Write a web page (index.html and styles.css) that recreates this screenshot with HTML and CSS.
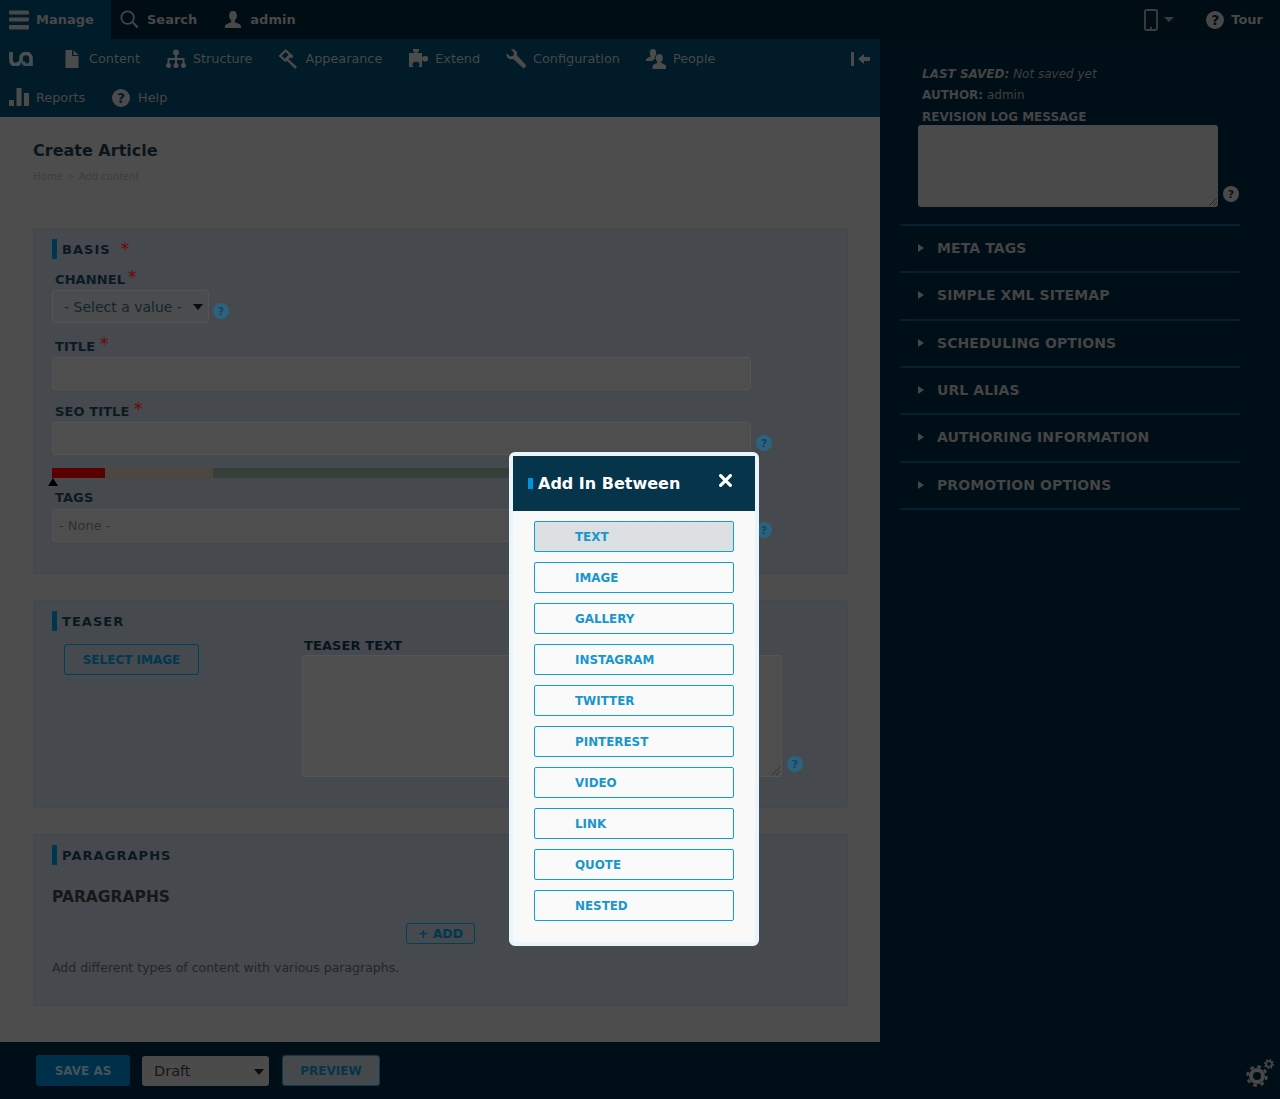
FILE: index.html
```html
<!DOCTYPE html>
<html lang="en">
<head>
<meta charset="utf-8">
<title>Create Article</title>
<link rel="stylesheet" href="styles.css">
</head>
<body>
<div class="app">
  <header class="topbar">
    <a class="top-item manage">
      <svg class="ic-top" viewBox="0 0 20 20"><path d="M0 1.500a1 1 0 0 1 1-1h18a1 1 0 0 1 1 1v2a1 1 0 0 1-1 1H1a1 1 0 0 1-1-1zM0 8.500a1 1 0 0 1 1-1h18a1 1 0 0 1 1 1v2a1 1 0 0 1-1 1H1a1 1 0 0 1-1-1zM0 16a1 1 0 0 1 1-1h18a1 1 0 0 1 1 1v2.500a1 1 0 0 1-1 1H1a1 1 0 0 1-1-1z"/></svg>
      <span>Manage</span>
    </a>
    <a class="top-item search">
      <svg class="ic-search" viewBox="0 0 20 20"><circle cx="8" cy="8" r="6.600" fill="none" stroke="#464646" stroke-width="1.800"/><path d="M12.500 13.500l1.500-1.500 5.500 5.500-1.800 1.800z"/></svg>
      <span>Search</span>
    </a>
    <a class="top-item user">
      <svg class="ic-user" viewBox="0 0 20 20"><path d="M10 0c3 0 4.300 2.300 4.300 5 0 2.500-1 4.500-2.300 5.500v2c2.500 1 6.500 2 7 4.500v2H1v-2c.5-2.500 4.500-3.500 7-4.500v-2C6.700 9.500 5.700 7.500 5.700 5c0-2.700 1.300-5 4.300-5z"/></svg>
      <span>admin</span>
    </a>
    <div class="top-right">
      <svg class="ic-phone" viewBox="0 0 14 22"><rect x="1" y="1" width="12" height="20" rx="1.500" fill="none" stroke="#3d3d3d" stroke-width="1.800"/><rect x="6" y="18" width="2" height="2" fill="#3d3d3d"/></svg>
      <span class="caret-top"></span>
      <a class="top-item tour"><span class="help-solid">?</span><span>Tour</span></a>
    </div>
  </header>

  <div class="columns">
    <div class="left">
      <nav class="tray">
        <div class="tray-row">
          <a class="logo">
            <svg viewBox="0 0 24 14" width="24" height="14"><path d="M14 9.500a4 4 0 0 0 7.500 1.500" fill="none" stroke="#35505e" stroke-width="3.400"/><path d="M2 0v8a4.500 4.500 0 0 0 8.700 1.800" fill="none" stroke="#4b4f51" stroke-width="3.800"/><path d="M12 10V6.200a5 4.800 0 0 1 10 0V14" fill="none" stroke="#4b4f51" stroke-width="3.600"/></svg>
          </a>
          <a class="tray-item">
            <svg class="ic" viewBox="0 0 20 20"><path d="M3.500 1H10v6h6.500v12h-13zM11.500 1l5 5h-5z"/></svg>
            <span>Content</span>
          </a>
          <a class="tray-item">
            <svg class="ic" viewBox="0 0 20 20"><circle cx="10" cy="3.500" r="3"/><circle cx="2.500" cy="16.500" r="2.500"/><circle cx="10" cy="16.500" r="2.500"/><circle cx="17.500" cy="16.500" r="2.500"/><path d="M9 5h2v4h7.500v6h-2v-4H11v4H9v-4H3.500v4h-2V9H9z"/></svg>
            <span>Structure</span>
          </a>
          <a class="tray-item">
            <svg class="ic" viewBox="0 0 20 20"><path d="M7.500 0l8 7-2 2.500-1.500-1-1.600 1.500 8.600 8.100-1.800 1.900-8.400-8.300-1.700 1.300L.5 7zM7.600 3L3.500 7l3.300 2.800 4-4z"/></svg>
            <span>Appearance</span>
          </a>
          <a class="tray-item">
            <svg class="ic" viewBox="0 0 20 20"><path d="M5 0h6v2.500H9.500V4H14v4.500c1-1.300 2-1.500 3.500-1.500a2.800 2.800 0 0 1 0 5.600c-1.500 0-2.500-.4-3.500-1.600V18h-3.500c.8-1 1-1.700 1-2.500a3.500 2.800 0 0 0-7 0c0 .8.200 1.500 1 2.500H1V4h5.500V2.500H5z"/></svg>
            <span>Extend</span>
          </a>
          <a class="tray-item">
            <svg class="ic" viewBox="0 0 20 20"><path d="M5 .5c2.500-1 5.500.5 6 3 .2 1 .1 1.800-.2 2.600l8.700 9.400c.7.800.7 1.700 0 2.500l-.6.600c-.8.700-1.700.7-2.500 0L7.300 10c-2.700 1-5.700-.2-6.600-3-.3-1-.3-1.800 0-2.800l3.600 3.300 3-.7.700-3z"/></svg>
            <span>Configuration</span>
          </a>
          <a class="tray-item">
            <svg class="ic" viewBox="0 0 20 20"><path d="M7 0c2.200 0 3.300 1.700 3.300 3.800 0 1.500-.5 2.800-1.300 3.700v1.700l.8.400c-1.300.5-2.800 1.300-3.500 2.400H0v-1.500c.4-1.500 3-2.200 5-3V7.500c-.8-.9-1.300-2.200-1.300-3.700C3.700 1.700 4.800 0 7 0z"/><path d="M13.500 5c2.200 0 3.300 1.700 3.300 3.800 0 1.600-.6 3-1.500 3.900V14c1.800.7 4.200 1.500 4.700 3v3H6.500v-3c.5-1.500 2.900-2.300 4.700-3v-1.300c-.9-.9-1.500-2.300-1.500-3.900C9.700 6.700 11.300 5 13.500 5z"/></svg>
            <span>People</span>
          </a>
          <svg class="ic-collapse" viewBox="0 0 20 16"><rect x="0" y="1" width="3" height="14"/><path d="M7 8l6-5v3h6v4h-6v3z"/></svg>
        </div>
        <div class="tray-row">
          <a class="tray-item first">
            <svg class="ic" viewBox="0 0 20 20"><rect x="0" y="12" width="5" height="6"/><rect x="7.500" y="0" width="5" height="18"/><rect x="15" y="5" width="5" height="13"/></svg>
            <span>Reports</span>
          </a>
          <a class="tray-item">
            <span class="help-solid tray-help">?</span>
            <span>Help</span>
          </a>
        </div>
      </nav>

      <main class="content">
        <h1 class="page-title">Create Article</h1>
        <div class="crumbs">Home<span class="crumb-sep">»</span>Add content</div>

        <section class="card card-basis">
          <h2 class="card-head">BASIS <span class="star star-head">*</span></h2>
          <div class="field field-a">
            <label class="label">CHANNEL<span class="star star-tight">*</span></label>
            <div class="control-row">
              <div class="select">- Select a value -<span class="caret"></span></div>
              <span class="help-blue help-near">?</span>
            </div>
          </div>
          <div class="field field-b">
            <label class="label">TITLE <span class="star">*</span></label>
            <div class="control-row"><div class="input"></div></div>
          </div>
          <div class="field field-c">
            <label class="label">SEO TITLE <span class="star">*</span></label>
            <div class="control-row"><div class="input"></div><span class="help-blue">?</span></div>
          </div>
          <div class="meter">
            <span class="meter-red"></span><span class="meter-tan"></span><span class="meter-green"></span>
          </div>
          <div class="meter-mark"></div>
          <div class="field field-d">
            <label class="label label-tags">TAGS</label>
            <div class="control-row"><div class="input input-none">- None -</div><span class="help-blue">?</span></div>
          </div>
        </section>

        <section class="card card-teaser">
          <h2 class="card-head">TEASER</h2>
          <div class="teaser-body">
            <div class="teaser-left"><a class="btn-outline btn-select">SELECT IMAGE</a></div>
            <div class="teaser-right">
              <label class="label label-teaser">TEASER TEXT</label>
              <div class="control-row row-teaser">
                <div class="textarea teaser-area"><span class="grip"></span></div>
                <span class="help-blue help-teaser">?</span>
              </div>
            </div>
          </div>
        </section>

        <section class="card card-para">
          <h2 class="card-head">PARAGRAPHS</h2>
          <h3 class="para-title">PARAGRAPHS</h3>
          <a class="btn-outline btn-add">+ ADD</a>
          <p class="para-text">Add different types of content with various paragraphs.</p>
        </section>
      </main>
    </div>

    <aside class="side">
      <div class="meta">
        <div class="meta-line meta-em"><b>LAST SAVED:</b> Not saved yet</div>
        <div class="meta-line meta-author"><b>AUTHOR:</b> admin</div>
        <div class="meta-line meta-rev"><b>REVISION LOG MESSAGE</b></div>
        <div class="rev-row">
          <div class="rev-area"><span class="grip grip-dark"></span></div>
          <span class="help-grey">?</span>
        </div>
      </div>
      <ul class="acc">
        <li class="acc-row"><i class="tri"></i>META TAGS</li>
        <li class="acc-row"><i class="tri"></i>SIMPLE XML SITEMAP</li>
        <li class="acc-row"><i class="tri"></i>SCHEDULING OPTIONS</li>
        <li class="acc-row"><i class="tri"></i>URL ALIAS</li>
        <li class="acc-row"><i class="tri"></i>AUTHORING INFORMATION</li>
        <li class="acc-row"><i class="tri"></i>PROMOTION OPTIONS</li>
      </ul>
    </aside>
  </div>

  <footer class="bottom">
    <a class="btn-save">SAVE AS</a>
    <div class="select-draft">Draft<span class="caret"></span></div>
    <a class="btn-preview">PREVIEW</a>
    <svg class="gears" viewBox="0 0 30 30">
      <circle cx="12" cy="18" r="6" fill="none" stroke="#474747" stroke-width="4"/>
      <circle cx="12" cy="18" r="9.500" fill="none" stroke="#474747" stroke-width="2.600" stroke-dasharray="3.800 3.660"/>
      <circle cx="24" cy="6" r="2.900" fill="none" stroke="#474747" stroke-width="1.800"/>
      <circle cx="24" cy="6" r="4.400" fill="none" stroke="#474747" stroke-width="1.400" stroke-dasharray="1.700 1.750"/>
    </svg>
  </footer>
</div>

<div class="modal">
  <div class="modal-head">
    <span class="modal-title">Add In Between</span>
    <svg class="modal-close" viewBox="0 0 12 12"><path d="M1.500 1.500l9 9M10.500 1.500l-9 9" stroke="#fff" stroke-width="3" stroke-linecap="round"/></svg>
  </div>
  <div class="modal-body">
    <a class="type-btn is-active">TEXT</a>
    <a class="type-btn">IMAGE</a>
    <a class="type-btn">GALLERY</a>
    <a class="type-btn">INSTAGRAM</a>
    <a class="type-btn">TWITTER</a>
    <a class="type-btn">PINTEREST</a>
    <a class="type-btn">VIDEO</a>
    <a class="type-btn">LINK</a>
    <a class="type-btn">QUOTE</a>
    <a class="type-btn">NESTED</a>
  </div>
</div>
</body>
</html>
```

FILE: styles.css
```css
* { box-sizing: border-box; }
html, body { margin: 0; padding: 0; height: 1099px; overflow: hidden; }
body { font-family: "DejaVu Sans", sans-serif; background: #000f17; color: #464646; position: relative; }
a { display: inline-block; }
svg { flex: none; display: block; }
h1, h2, h3, p, ul { margin: 0; padding: 0; }

.app { display: flex; flex-direction: column; width: 1280px; height: 1099px; }

/* top bar */
.topbar { display: flex; align-items: center; height: 39px; flex: none; background: #000d14; }
.top-item { display: flex; align-items: center; height: 39px; font-size: 13px; font-weight: 700; color: #484848; }
.manage { width: 111px; padding-left: 9px; gap: 7px; background: #001b29; }
.search { margin-left: 9px; gap: 8px; }
.user { margin-left: 27px; gap: 8px; }
.ic-top { width: 20px; height: 20px; fill: #484848; }
.ic-search { width: 19px; height: 19px; fill: #464646; }
.ic-user { width: 18px; height: 20px; fill: #484848; }
.top-right { margin-left: auto; display: flex; align-items: center; padding-right: 17px; }
.ic-phone { width: 14px; height: 22px; margin-right: 6px; }
.caret-top { width: 0; height: 0; border: 5px solid transparent; border-top-color: #3a3a3a; border-bottom-width: 0; margin-right: 32px; }
.tour { gap: 7px; }
.help-solid { display: flex; align-items: center; justify-content: center; width: 18px; height: 18px; border-radius: 50%; background: #484848; color: #000d14; font-size: 14px; font-weight: 700; line-height: 1; }

/* columns */
.columns { display: flex; flex: 1; min-height: 0; }
.left { width: 880px; display: flex; flex-direction: column; }

/* tray */
.tray { height: 78px; flex: none; background: #021b28; }
.tray-row { display: flex; align-items: center; height: 39px; position: relative; }
.logo { margin: 0 16px 0 9px; width: 24px; height: 14px; }
.tray-item { display: flex; align-items: center; gap: 7px; padding: 0 13px; font-size: 12.800px; color: #474747; }
.tray-item.first { padding-left: 9px; }
.ic { width: 20px; height: 20px; fill: #4b4b4b; }
.tray-help { width: 18px; height: 18px; margin-left: 1px; margin-right: 1px; color: #021b28; background: #4b4b4b; }
.ic-collapse { width: 20px; height: 16px; fill: #4a4a4a; margin-left: auto; margin-right: 9px; }

/* content */
.content { flex: 1; background: #4d4d4d; padding: 23px 32px 0 33px; min-height: 0; }
.page-title { height: 20px; font-size: 16px; line-height: 22px; font-weight: 700; color: #0a151b; }
.crumbs { margin-top: 9px; height: 14px; font-size: 10px; line-height: 16px; color: #3e3e3e; }
.crumb-sep { margin: 0 5px 0 5px; }

.card { background: #46494d; border: 1px solid #41474b; border-radius: 2px; padding: 10px 18px 0; }
.card-basis { margin-top: 45px; height: 346px; }
.card-teaser { margin-top: 26px; height: 208px; }
.card-para { margin-top: 26px; height: 172px; }
.card-head { display: flex; align-items: center; height: 20px; border-left: 5px solid #003650; padding-left: 5px; font-size: 13px; font-weight: 700; letter-spacing: 1.050px; color: #0a1820; }
.star { color: #700606; font-size: 17px; font-weight: 400; line-height: 10px; position: relative; top: -1px; }
.star-head { margin-left: 10px; top: 0; }
.star-tight { margin-left: 3px; }

.field-a { margin-top: 12px; }
.field-b { margin-top: 15px; }
.field-c { margin-top: 13px; }
.field-d { margin-top: 3px; }
.label { display: block; height: 16px; padding-top: 1px; line-height: 16px; margin: 0 0 3px 3px; font-size: 13px; font-weight: 700; letter-spacing: .1px; color: #0b1a22; }
.label-tags { margin-bottom: 4px; }
.control-row { display: flex; align-items: flex-end; gap: 5px; }
.select { position: relative; width: 157px; height: 33px; line-height: 33px; padding-left: 11px; font-size: 14px; color: #14242c; background: #4a4c4d; border: 1px solid #555; border-radius: 3px; }
.caret { position: absolute; right: 5px; top: 13px; width: 0; height: 0; border: 5px solid transparent; border-top: 6px solid #0b0b0b; border-bottom-width: 0; }
.input { width: 699px; height: 33px; background: #4e4e4e; border: 1px solid #555; border-radius: 3px; }
.input-none { line-height: 31px; padding-left: 6px; font-size: 13px; color: #2e3134; }
.help-blue { display: flex; align-items: center; justify-content: center; width: 16px; height: 16px; margin-bottom: 4px; border-radius: 50%; background: #2b627f; color: #1c4358; font-size: 11px; font-weight: 700; line-height: 1; }
.help-near { margin-left: -1px; }
.help-teaser { margin-bottom: 5px; }
.meter { display: flex; height: 10px; width: 699px; margin-top: 13px; }
.meter-red { width: 53px; background: #5a0000; }
.meter-tan { width: 108px; background: #4c4840; }
.meter-green { flex: 1; background: #35403a; }
.meter-mark { width: 0; height: 0; margin-left: -4px; border: 5px solid transparent; border-top-width: 0; border-bottom: 8px solid #000; }

.teaser-body { display: flex; margin-top: 6px; }
.teaser-left { width: 250px; padding: 7px 0 0 12px; }
.btn-outline { border: 1px solid #003f5b; border-radius: 3px; text-align: center; font-weight: 700; color: #023750; }
.btn-select { width: 135px; height: 31px; line-height: 30px; font-size: 12px; }
.label-teaser { margin: 0 0 2px 2px; color: #07141b; }
.textarea { position: relative; background: #4e4e4e; border: 1px solid #555; border-radius: 3px; }
.teaser-area { width: 480px; height: 122px; }
.grip { position: absolute; right: 1px; bottom: 1px; width: 10px; height: 10px; background: repeating-linear-gradient(135deg, transparent 0 2px, #333 2px 3px); clip-path: polygon(100% 0, 100% 100%, 0 100%); }
.grip-dark { background: repeating-linear-gradient(135deg, transparent 0 2px, #2b2b2b 2px 3px); }

.para-title { margin-top: 21px; height: 20px; font-size: 15.500px; line-height: 22px; font-weight: 700; color: #171717; }
.btn-add { display: block; margin: 17px 0 0 354px; width: 69px; height: 21px; line-height: 20px; font-size: 12.500px; }
.para-text { margin-top: 15px; height: 16px; font-size: 12.500px; line-height: 18px; color: #232527; }

/* sidebar */
.side { width: 400px; background: #000f17; padding-top: 26px; }
.meta { padding-left: 42px; }
.meta-line { height: 16px; line-height: 18px; font-size: 12px; color: #3f3f3f; }
.meta-line b { color: #444; }
.meta-em { font-style: italic; }
.meta-author { margin-top: 5px; }
.meta-rev { margin-top: 6px; }
.rev-row { display: flex; align-items: flex-end; gap: 5px; margin: 1px 0 0 -4px; }
.rev-area { position: relative; width: 300px; height: 82px; background: #4a4a4a; border-radius: 3px; }
.help-grey { display: flex; align-items: center; justify-content: center; width: 16px; height: 16px; margin-bottom: 5px; border-radius: 50%; background: #4a4a4a; color: #0b1317; font-size: 11px; font-weight: 700; line-height: 1; }
.acc { list-style: none; margin: 17px 0 0 20px; width: 340px; border-top: 2px solid #03202f; }
.acc-row { display: flex; align-items: center; height: 47.330px; padding: 0 0 1.400px 18px; border-bottom: 2px solid #03202f; font-size: 14px; font-weight: 700; letter-spacing: .1px; color: #444; }
.tri { width: 0; height: 0; margin-right: 13px; border: 4px solid transparent; border-left: 6px solid #474747; border-right-width: 0; }

/* bottom */
.bottom { display: flex; align-items: center; flex: none; height: 57px; padding-left: 36px; background: #000f17; }
.btn-save { width: 94px; height: 31px; line-height: 32px; text-align: center; background: #002f49; border-radius: 3px; font-size: 12px; font-weight: 700; color: #45535b; }
.select-draft { position: relative; width: 127px; height: 30px; margin-left: 12px; padding-left: 12px; line-height: 30px; background: #4b4b4b; border-radius: 3px; font-size: 14.500px; color: #171717; }
.btn-preview { width: 98px; height: 31px; margin-left: 13px; line-height: 30px; text-align: center; background: #46494b; border: 1px solid #0a3a51; border-radius: 3px; font-size: 12px; font-weight: 700; color: #063449; }
.gears { width: 30px; height: 30px; margin: 5px 5px 0 auto; }

/* modal */
.modal { position: absolute; left: 509px; top: 452px; width: 250px; height: 494px; background: #f9f9f9; border: 4px solid #e8f5fd; border-radius: 6px; }
.modal-head { display: flex; align-items: center; justify-content: space-between; height: 55px; padding: 0 22px 0 15px; background: #05344b; }
.modal-title { border-left: 5px solid #0094e0; padding-left: 5px; height: 11px; line-height: 11px; font-size: 16px; font-weight: 700; color: #fff; }
.modal-close { width: 13px; height: 13px; margin: -7px 1px 0 0; }
.modal-body { display: flex; flex-direction: column; gap: 10px; padding: 10px 21px; }
.type-btn { display: block; width: 200px; height: 31px; line-height: 31px; padding-left: 40px; background: #fafafa; border: 1px solid #0fa0dc; border-radius: 2px; font-size: 11.900px; font-weight: 700; color: #1a95ce; }
.type-btn.is-active { background: #dce0e3; }
```
